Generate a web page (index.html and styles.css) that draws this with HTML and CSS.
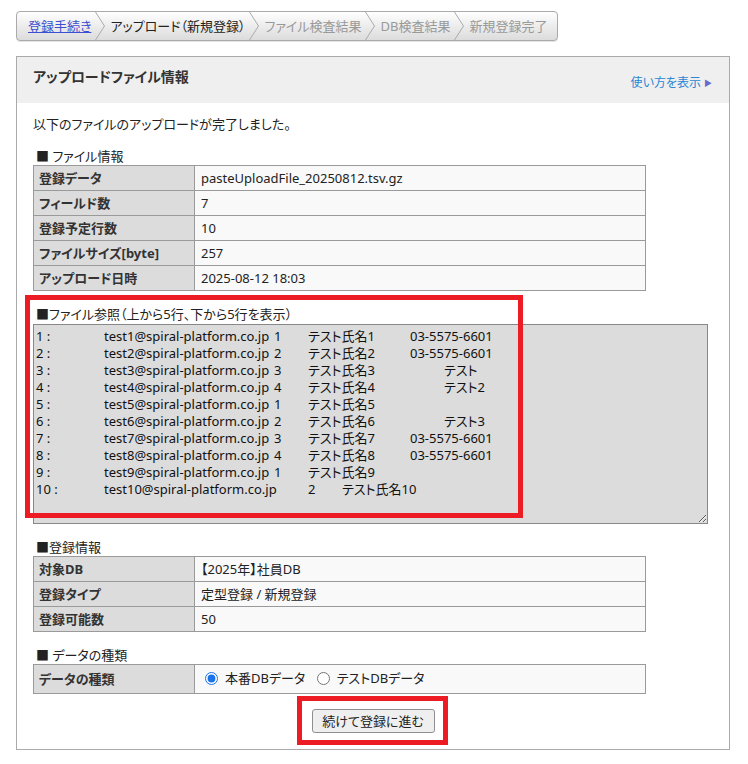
FILE: index.html
```html
<!DOCTYPE html>
<html lang="ja">
<head>
<meta charset="utf-8">
<title>アップロードファイル情報</title>
<link rel="stylesheet" href="styles.css">
</head>
<body>
<div class="page">
  <nav class="crumbs">
    <a class="crumb link" href="#">登録手続き</a>
    <svg class="sep" width="10" height="28" viewBox="0 0 10 28"><polyline points="0.5,0 9.5,14 0.5,28"/></svg>
    <span class="crumb current">アップロード（新規登録）</span>
    <svg class="sep" width="10" height="28" viewBox="0 0 10 28"><polyline points="0.5,0 9.5,14 0.5,28"/></svg>
    <span class="crumb todo">ファイル検査結果</span>
    <svg class="sep" width="10" height="28" viewBox="0 0 10 28"><polyline points="0.5,0 9.5,14 0.5,28"/></svg>
    <span class="crumb todo">DB検査結果</span>
    <svg class="sep" width="10" height="28" viewBox="0 0 10 28"><polyline points="0.5,0 9.5,14 0.5,28"/></svg>
    <span class="crumb todo last">新規登録完了</span>
  </nav>

  <section class="panel">
    <header class="panel-head">
      <h1 class="panel-title">アップロードファイル情報</h1>
      <a class="help" href="#">使い方を表示<span class="tri">▶</span></a>
    </header>
    <div class="panel-body">
      <p class="intro">以下のファイルのアップロードが完了しました。</p>

      <h2 class="sec">■ ファイル情報</h2>
      <table class="info">
        <colgroup><col class="c-label"><col></colgroup>
        <tr><th>登録データ</th><td>pasteUploadFile_20250812.tsv.gz</td></tr>
        <tr><th>フィールド数</th><td>7</td></tr>
        <tr><th>登録予定行数</th><td>10</td></tr>
        <tr><th>ファイルサイズ[byte]</th><td>257</td></tr>
        <tr><th>アップロード日時</th><td>2025-08-12 18:03</td></tr>
      </table>

      <div class="ref">
        <h2 class="sec">■ファイル参照（上から5行、下から5行を表示）</h2>
        <textarea class="preview" readonly>1 :&#9;&#9;test1@spiral-platform.co.jp&#9;1&#9;テスト氏名1&#9;03-5575-6601
2 :&#9;&#9;test2@spiral-platform.co.jp&#9;2&#9;テスト氏名2&#9;03-5575-6601
3 :&#9;&#9;test3@spiral-platform.co.jp&#9;3&#9;テスト氏名3&#9;&#9;テスト
4 :&#9;&#9;test4@spiral-platform.co.jp&#9;4&#9;テスト氏名4&#9;&#9;テスト2
5 :&#9;&#9;test5@spiral-platform.co.jp&#9;1&#9;テスト氏名5
6 :&#9;&#9;test6@spiral-platform.co.jp&#9;2&#9;テスト氏名6&#9;&#9;テスト3
7 :&#9;&#9;test7@spiral-platform.co.jp&#9;3&#9;テスト氏名7&#9;03-5575-6601
8 :&#9;&#9;test8@spiral-platform.co.jp&#9;4&#9;テスト氏名8&#9;03-5575-6601
9 :&#9;&#9;test9@spiral-platform.co.jp&#9;1&#9;テスト氏名9
10 :&#9;&#9;test10@spiral-platform.co.jp&#9;2&#9;テスト氏名10</textarea>
        <div class="mark mark-ref"></div>
      </div>

      <h2 class="sec">■登録情報</h2>
      <table class="info">
        <colgroup><col class="c-label"><col></colgroup>
        <tr><th>対象DB</th><td>【2025年】社員DB</td></tr>
        <tr><th>登録タイプ</th><td>定型登録 / 新規登録</td></tr>
        <tr><th>登録可能数</th><td>50</td></tr>
      </table>

      <h2 class="sec">■ データの種類</h2>
      <table class="info">
        <colgroup><col class="c-label"><col></colgroup>
        <tr class="radio-row"><th>データの種類</th><td>
          <label class="opt"><input type="radio" name="dbtype" checked>本番DBデータ</label>
          <label class="opt"><input type="radio" name="dbtype">テストDBデータ</label>
        </td></tr>
      </table>

      <div class="actions">
        <div class="btn-wrap">
          <button class="btn" type="button">続けて登録に進む</button>
          <div class="mark mark-btn"></div>
        </div>
      </div>
    </div>
  </section>
</div>
</body>
</html>
```

FILE: styles.css
```css
html, body {
  margin: 0;
  padding: 0;
  background: #fff;
}
body {
  font-family: "Noto Sans", "Noto Sans CJK JP", sans-serif;
  font-size: 13px;
  line-height: 18px;
  color: #222;
  font-feature-settings: "palt";
}
.page {
  padding: 11px 0 0 16px;
  width: 714px;
}

/* breadcrumbs */
.crumbs {
  display: inline-flex;
  align-items: center;
  height: 28px;
  border: 1px solid #aaa;
  border-radius: 4px;
  background: linear-gradient(#ffffff, #f0f0f0 40%, #dcdcdc);
  box-shadow: 0 1px 0 #e4e4e4;
}
.crumb {
  padding: 0 2px;
  white-space: nowrap;
}
.crumb.link {
  padding-left: 11px;
  color: #3b4fd0;
  text-decoration: underline;
}
.crumb.current { color: #222; }
.crumb.todo { color: #999; }
.crumb.last { padding-right: 10px; }
.sep {
  display: block;
  margin: 0 3px 0 2px;
}
.sep polyline {
  fill: none;
  stroke: #aaa;
  stroke-width: 1;
}

/* panel */
.panel {
  margin-top: 15px;
  border: 1px solid #aaa;
}
.panel-head {
  display: flex;
  justify-content: space-between;
  align-items: flex-start;
  height: 46px;
  padding: 10px 17px 0 16px;
  box-sizing: border-box;
  background: #efefef;
}
.panel-title {
  margin: 0;
  font-size: 14px;
  line-height: 20px;
  font-weight: bold;
  color: #333;
}
.help {
  margin-top: 7px;
  font-size: 12px;
  line-height: 18px;
  color: #2a86d2;
  text-decoration: none;
}
.tri {
  font-size: 8px;
  color: #6a6acc;
  margin-left: 3px;
  vertical-align: 1px;
}
.panel-body {
  padding: 12px 16px 16px;
}
.intro {
  margin: 0;
}
.sec {
  margin: 14px 0 0;
  padding-left: 3px;
  font-size: 13px;
  line-height: 18px;
  font-weight: normal;
}

/* tables */
.info {
  width: 613px;
  border-collapse: collapse;
  table-layout: fixed;
}
.c-label { width: 161px; }
.info th, .info td {
  border: 1px solid #9a9a9a;
  padding: 3px 6px;
  line-height: 18px;
  text-align: left;
  vertical-align: middle;
}
.info th {
  padding-left: 5px;
  background: #dcdcdc;
  font-weight: bold;
  color: #333;
}
.info td {
  background: #f9f9f9;
}
.radio-row th, .radio-row td {
  padding-top: 4px;
  padding-bottom: 4px;
}
.opt {
  display: inline-flex;
  align-items: center;
  margin-right: 4px;
}
.opt input {
  width: 13px;
  height: 13px;
  margin: 0 7px 0 4px;
  accent-color: #1a73e8;
}

/* file preview */
.ref {
  position: relative;
}
.preview {
  display: block;
  box-sizing: border-box;
  width: 675px;
  height: 200px;
  margin: 1px 0 0;
  padding: 3px 2px;
  border: 1px solid #888;
  background: #dcdcdc;
  color: #111;
  font-family: "Noto Sans", "Noto Sans CJK JP", sans-serif;
  font-size: 13px;
  line-height: 17px;
  font-feature-settings: "palt";
  tab-size: 34px;
  white-space: pre;
  overflow: hidden;
  resize: both;
}

/* annotation boxes */
.mark {
  position: absolute;
  box-sizing: border-box;
  border: 5px solid #ed1c24;
  pointer-events: none;
}
.mark-ref {
  left: -8px;
  top: -10px;
  width: 498px;
  height: 223px;
}

.actions {
  display: flex;
  justify-content: center;
  margin-top: 15px;
}
.btn-wrap {
  position: relative;
}
.btn {
  display: block;
  height: 24px;
  width: 123px;
  padding: 0;
  border: 1px solid #8f8f8f;
  border-radius: 3px;
  background: #efefef;
  font-family: "Noto Sans", "Noto Sans CJK JP", sans-serif;
  font-size: 13px;
  color: #222;
  font-feature-settings: "palt";
}
.mark-btn {
  left: -15px;
  top: -13px;
  right: -13px;
  bottom: -12px;
}
```
